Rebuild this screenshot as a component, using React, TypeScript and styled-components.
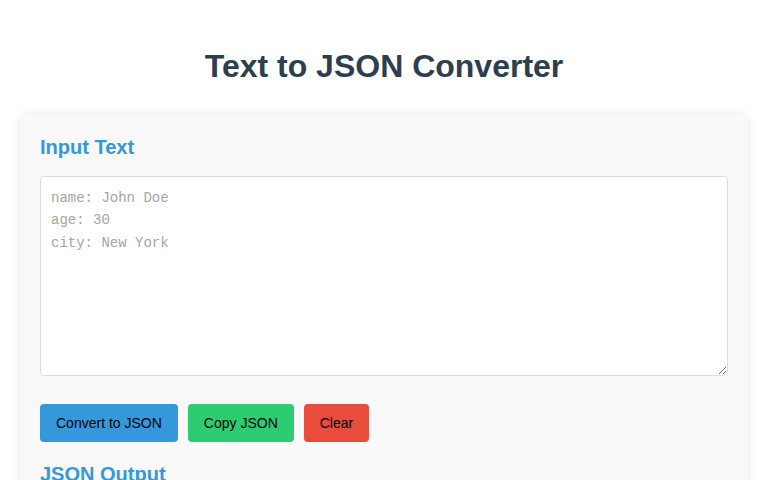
import React, { useState } from "react";
import styled, { createGlobalStyle } from "styled-components";

const GlobalStyle = createGlobalStyle`
  html, body {
    margin: 0;
    padding: 0;
    background: #ffffff;
    font-family: "Liberation Sans", Arial, sans-serif;
  }
  * { box-sizing: border-box; }
`;

const Page = styled.div`
  padding: 0 20px 20px;
`;

const Title = styled.h1`
  margin: 0;
  padding: 47px 0 29px;
  text-align: center;
  font-size: 32px;
  font-weight: bold;
  line-height: 38px;
  color: #2c3e50;
`;

const Card = styled.div`
  background: #f9f9f9;
  border-radius: 8px;
  box-shadow: 0 0 10px rgba(0, 0, 0, 0.1);
  padding: 22px 20px 20px;
`;

const SectionTitle = styled.h2<{ $top?: number }>`
  margin: ${(p) => p.$top ?? 0}px 0 17px;
  font-size: 20px;
  font-weight: bold;
  line-height: 23px;
  color: #3498db;
`;

const Input = styled.textarea`
  display: block;
  width: 100%;
  height: 200px;
  margin: 0 0 28px;
  padding: 10px;
  border: 1px solid #dddddd;
  border-radius: 4px;
  background: #ffffff;
  font-family: "Nimbus Mono PS", "Liberation Mono", "Courier New", monospace;
  font-size: 14px;
  line-height: 1.6;
  color: #333333;
  resize: vertical;
  &::placeholder {
    color: #a5a5a5;
  }
`;

const Actions = styled.div`
  display: flex;
  gap: 10px;
`;

const Button = styled.button<{ $bg: string }>`
  height: 38px;
  padding: 0 16px;
  border: none;
  border-radius: 4px;
  background: ${(p) => p.$bg};
  color: #000000;
  font-family: inherit;
  font-size: 14px;
  cursor: pointer;
`;

export default function App() {
  const [text, setText] = useState("");
  return (
    <Page>
      <GlobalStyle />
      <Title>Text to JSON Converter</Title>
      <Card>
        <SectionTitle>Input Text</SectionTitle>
        <Input
          value={text}
          onChange={(e) => setText(e.target.value)}
          placeholder={"name: John Doe\nage: 30\ncity: New York"}
        />
        <Actions>
          <Button $bg="#3498db">Convert to JSON</Button>
          <Button $bg="#2ecc71">Copy JSON</Button>
          <Button $bg="#e74c3c">Clear</Button>
        </Actions>
        <SectionTitle $top={21}>JSON Output</SectionTitle>
      </Card>
    </Page>
  );
}
